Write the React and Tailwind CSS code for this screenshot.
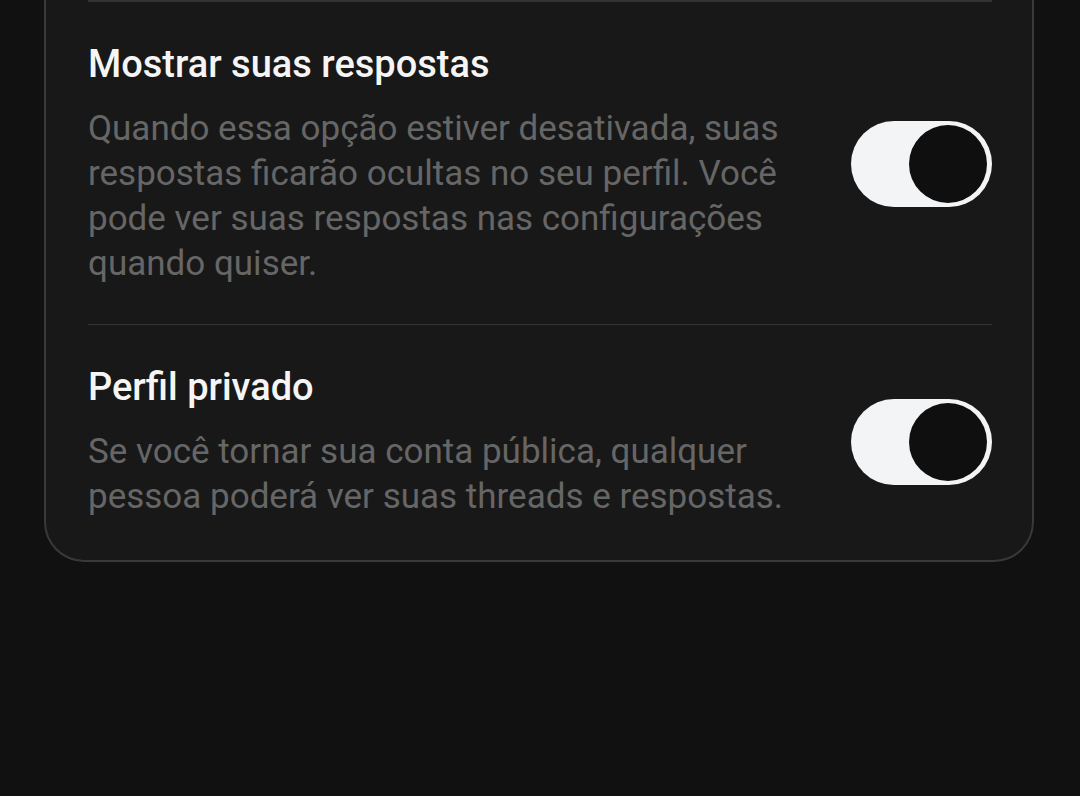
import React, { useState } from 'react';

function Toggle({ on, onChange }) {
  return (
    <button
      type="button"
      onClick={() => onChange(!on)}
      className={`flex h-[86px] w-[141px] shrink-0 items-center rounded-full bg-[#f3f4f6] px-[5px] ${on ? 'justify-end' : 'justify-start'}`}
    >
      <span className="block h-[78px] w-[78px] rounded-full bg-[#0f0f0f]" />
    </button>
  );
}

function SettingRow({ title, description, on, onChange, last }) {
  return (
    <div className={`flex items-center justify-between pt-[40px] ${last ? 'pb-[41px]' : 'pb-[38px] border-b border-[#333333]'}`}>
      <div className="w-[730px]">
        <h3 className="text-[38px] font-medium leading-[44px] text-[#f5f5f5]">{title}</h3>
        <p className="mt-[20px] text-[35px] leading-[45px] text-[#666666]">{description}</p>
      </div>
      <Toggle on={on} onChange={onChange} />
    </div>
  );
}

export default function App() {
  const [showReplies, setShowReplies] = useState(true);
  const [privateProfile, setPrivateProfile] = useState(true);

  return (
    <div className="h-[796px] overflow-hidden bg-[#111111]" style={{ fontFamily: 'Roboto, "Noto Sans", sans-serif' }}>
      <div className="ml-[44px] mr-[46px] rounded-b-[40px] border-2 border-t-0 border-[#393939] bg-[#181818] pl-[42px] pr-[40px]">
        <div className="border-t-2 border-[#333333]">
          <SettingRow
            title="Mostrar suas respostas"
            description="Quando essa opção estiver desativada, suas respostas ficarão ocultas no seu perfil. Você pode ver suas respostas nas configurações quando quiser."
            on={showReplies}
            onChange={setShowReplies}
          />
          <SettingRow
            title="Perfil privado"
            description="Se você tornar sua conta pública, qualquer pessoa poderá ver suas threads e respostas."
            on={privateProfile}
            onChange={setPrivateProfile}
            last
          />
        </div>
      </div>
    </div>
  );
}
